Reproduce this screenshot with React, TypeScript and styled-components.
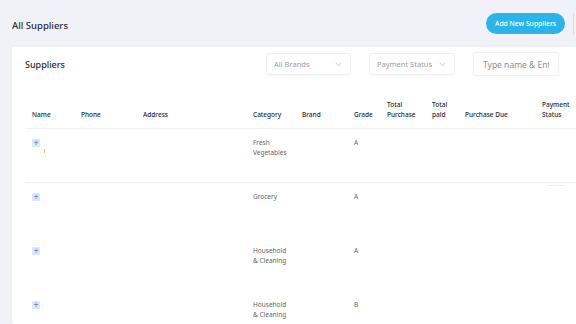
import styled, { createGlobalStyle } from 'styled-components';

const GlobalStyle = createGlobalStyle`
  html, body {
    margin: 0;
    padding: 0;
    background: #f1f2f8;
    overflow: hidden;
  }
  body {
    font-family: 'Noto Sans', 'Liberation Sans', sans-serif;
  }
`;

interface Supplier {
  category: string[];
  grade: string;
  marker?: boolean;
}

const suppliers: Supplier[] = [
  { category: ['Fresh', 'Vegetables'], grade: 'A', marker: true },
  { category: ['Grocery'], grade: 'A' },
  { category: ['Household', '& Cleaning'], grade: 'A' },
  { category: ['Household', '& Cleaning'], grade: 'B' },
];

const columns: { label: string[]; width: number }[] = [
  { label: ['Name'], width: 49 },
  { label: ['Phone'], width: 62 },
  { label: ['Address'], width: 110 },
  { label: ['Category'], width: 49 },
  { label: ['Brand'], width: 52 },
  { label: ['Grade'], width: 33 },
  { label: ['Total', 'Purchase'], width: 45 },
  { label: ['Total', 'paid'], width: 33 },
  { label: ['Purchase Due'], width: 77 },
  { label: ['Payment', 'Status'], width: 60 },
];

const Chevron = () => (
  <svg width="7" height="5" viewBox="0 0 8 5" fill="none">
    <path d="M1 1l3 3 3-3" stroke="#b5b8c2" strokeWidth="0.9" strokeLinecap="round" strokeLinejoin="round" />
  </svg>
);

const App = () => {
  return (
    <>
      <GlobalStyle />
      <Page>
        <TopBar>
          <PageTitle>All Suppliers</PageTitle>
          <AddButton>Add New Suppliers</AddButton>
          <EdgeStub />
        </TopBar>

        <Card>
          <CardHeader>
            <CardTitle>Suppliers</CardTitle>
            <Filters>
              <Select $width={85}>
                All Brands
                <Chevron />
              </Select>
              <Select $width={86}>
                Payment Status
                <Chevron />
              </Select>
              <SearchBox placeholder="Type name & Ent" />
            </Filters>
          </CardHeader>

          <Table>
            <colgroup>
              {columns.map((c, i) => (
                <col key={i} style={{ width: c.width }} />
              ))}
            </colgroup>
            <thead>
              <tr>
                {columns.map((c, i) => (
                  <HeadCell key={i}>
                    {c.label.map((l, j) => (
                      <div key={j}>{l}</div>
                    ))}
                  </HeadCell>
                ))}
              </tr>
            </thead>
            <tbody>
              {suppliers.map((s, i) => (
                <Row key={i} $lined={i === 0}>
                  <Cell>
                    <ExpandIcon>+</ExpandIcon>
                    {s.marker && <Marker />}
                  </Cell>
                  <Cell />
                  <Cell />
                  <Cell>
                    {s.category.map((l, j) => (
                      <div key={j}>{l}</div>
                    ))}
                  </Cell>
                  <Cell />
                  <Cell>{s.grade}</Cell>
                  <Cell />
                  <Cell />
                  <Cell />
                  <Cell>{i === 0 && <DueTick />}</Cell>
                </Row>
              ))}
            </tbody>
          </Table>
        </Card>
      </Page>
    </>
  );
};

const Page = styled.div`
  width: 600px;
  height: 324px;
  overflow: hidden;
  display: flex;
  flex-direction: column;
  padding-left: 12px;
  box-sizing: border-box;
`;

const TopBar = styled.div`
  flex-shrink: 0;
  height: 47px;
  display: flex;
  align-items: center;
`;

const PageTitle = styled.h1`
  flex: 1;
  margin: 0;
  padding-top: 3px;
  font-size: 9.5px;
  font-weight: 500;
  color: #2a2b33;
`;

const AddButton = styled.button`
  width: 79px;
  height: 21px;
  border: none;
  border-radius: 11px;
  background: #2ab4ea;
  color: #fff;
  font-family: inherit;
  font-size: 6.8px;
  font-weight: 500;
  padding: 0;
`;

const EdgeStub = styled.div`
  width: 1px;
  height: 22px;
  margin-left: 8px;
  margin-right: 26px;
  background: #d9dbe3;
`;

const Card = styled.div`
  flex: 1;
  min-height: 0;
  background: #fff;
  border-radius: 3px;
  padding: 0 13px;
  box-shadow: 0 0 4px rgba(30, 40, 80, 0.04);
`;

const CardHeader = styled.div`
  height: 34px;
  display: flex;
  align-items: center;
`;

const CardTitle = styled.h2`
  flex: 1;
  margin: 0;
  font-size: 9px;
  font-weight: 500;
  color: #2a2b33;
`;

const Filters = styled.div`
  display: flex;
  align-items: center;
  gap: 18px;
  margin-right: 28px;
`;

const Select = styled.div<{ $width: number }>`
  width: ${(p) => p.$width}px;
  height: 22px;
  box-sizing: border-box;
  border: 1px solid #eceef3;
  border-radius: 3px;
  padding: 0 8px 0 7px;
  display: flex;
  align-items: center;
  justify-content: space-between;
  font-size: 7.5px;
  color: #9a9ca6;
  box-shadow: 0 1px 2px rgba(0, 0, 0, 0.02);
`;

const SearchBox = styled.input`
  width: 86px;
  height: 24px;
  box-sizing: border-box;
  border: 1px solid #eceef3;
  border-radius: 3px;
  padding: 0 9px;
  font-family: inherit;
  font-size: 8.5px;
  color: #444;
  outline: none;
  &::placeholder {
    color: #8a8c96;
  }
`;

const Table = styled.table`
  margin-top: 1px;
  border-collapse: collapse;
  table-layout: fixed;
  width: 570px;
`;

const HeadCell = styled.th`
  height: 38px;
  padding: 0 0 8px 7px;
  text-align: left;
  vertical-align: bottom;
  font-size: 6.5px;
  font-weight: 500;
  line-height: 10px;
  color: #26272e;
  border-bottom: 1px solid #eef0f4;
  white-space: nowrap;
`;

const Row = styled.tr<{ $lined: boolean }>`
  height: 54px;
  border-bottom: 1px solid ${(p) => (p.$lined ? '#e9ebf0' : 'transparent')};
`;

const Cell = styled.td`
  padding: 9px 0 0 7px;
  vertical-align: top;
  font-size: 6.5px;
  line-height: 10px;
  color: #62646d;
  position: relative;
`;

const ExpandIcon = styled.span`
  display: inline-flex;
  align-items: center;
  justify-content: center;
  width: 8px;
  height: 8px;
  margin-top: 1px;
  background: #dfe7f6;
  border-radius: 1px;
  color: #6b8fd6;
  font-size: 8px;
  line-height: 8px;
  font-weight: 600;
`;

const Marker = styled.span`
  position: absolute;
  left: 19px;
  top: 20px;
  width: 1px;
  height: 4px;
  background: #b9d86a;
`;

const DueTick = styled.span`
  position: absolute;
  left: 13px;
  bottom: -4px;
  width: 17px;
  height: 1px;
  background: #f3edd6;
`;

export default App;
